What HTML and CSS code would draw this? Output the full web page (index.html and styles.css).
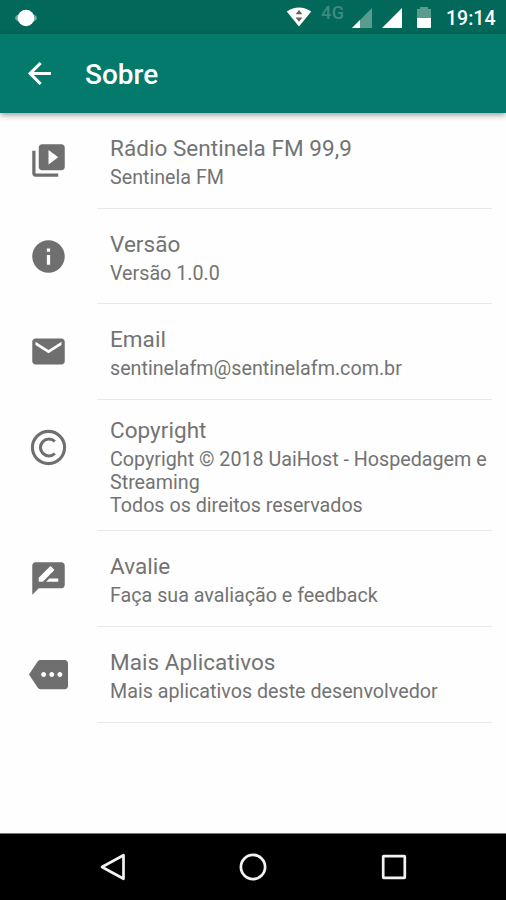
FILE: index.html
```html
<!DOCTYPE html>
<html lang="pt-BR">
<head>
<meta charset="utf-8">
<title>Sobre</title>
<link rel="stylesheet" href="styles.css">
</head>
<body>
<div class="screen">
  <div class="status">
    <svg class="notif" viewBox="0 0 24 18"><ellipse cx="12" cy="9" rx="11" ry="5" fill="#fff" opacity=".45"/><circle cx="12" cy="9" r="8.3" fill="#fff"/></svg>
    <svg class="wifi" viewBox="0 0 26 20"><path d="M.8 4.5Q13-3.3 25.2 4.5L13 19.6Z" fill="#fff"/><path d="M9.6 7.2L13 3l3.4 4.2zM9.6 10.4h6.8L13 14.8z" fill="#65605e"/></svg>
    <span class="net">4G</span>
    <svg class="signal weak" viewBox="0 0 20 20"><path d="M0 20L20 0V20Z" fill="#5a9b90"/><path d="M0 20L8 12V20Z" fill="#fff"/></svg>
    <svg class="signal" viewBox="0 0 20 20"><path d="M0 20L20 0V20Z" fill="#fff"/></svg>
    <svg class="battery" viewBox="0 0 14 21"><path d="M3 0h8v2h3v9H0V2h3z" fill="#5a9b90"/><path d="M0 11h14v9q0 1-1 1H1q-1 0-1-1z" fill="#fff"/></svg>
    <span class="clock">19:14</span>
  </div>
  <header class="bar">
    <svg class="back" viewBox="0 0 24 24"><path d="M19 11.100H8.500l4.900-4.900L12 4.900 4.900 12l7.100 7.100 1.400-1.300-4.900-4.900H19z" fill="#fff"/></svg>
    <h1>Sobre</h1>
  </header>
  <main class="list">
    <section class="row">
      <svg class="icon" viewBox="0 0 24 24"><path d="M4 6H2v14c0 1.100.9 2 2 2h14v-2H4V6zm16-4H8c-1.100 0-2 .9-2 2v12c0 1.100.9 2 2 2h12c1.100 0 2-.9 2-2V4c0-1.100-.9-2-2-2zm-8 12.500v-9l6 4.500-6 4.500z"/></svg>
      <div class="text"><h2>Rádio Sentinela FM 99,9</h2><p>Sentinela FM</p></div>
    </section>
    <section class="row">
      <svg class="icon" viewBox="0 0 24 24"><path d="M12 2C6.480 2 2 6.480 2 12s4.480 10 10 10 10-4.480 10-10S17.520 2 12 2zm1 15h-2v-6h2v6zm0-8h-2V7h2v2z"/></svg>
      <div class="text"><h2>Versão</h2><p>Versão 1.0.0</p></div>
    </section>
    <section class="row">
      <svg class="icon" viewBox="0 0 24 24"><path d="M20 4H4c-1.100 0-1.990.9-1.990 2L2 18c0 1.100.9 2 2 2h16c1.100 0 2-.9 2-2V6c0-1.100-.9-2-2-2zm0 4l-8 5-8-5V6l8 5 8-5v2z"/></svg>
      <div class="text"><h2>Email</h2><p>sentinelafm@sentinelafm.com.br</p></div>
    </section>
    <section class="row tall">
      <svg class="icon" viewBox="0 0 24 24"><circle cx="12" cy="12" r="9.900" fill="none" stroke="#6f6f6f" stroke-width="1.900"/><path d="M15.900 8.300A5.200 5.200 0 1 0 15.900 15.700" fill="none" stroke="#6f6f6f" stroke-width="1.900"/></svg>
      <div class="text"><h2>Copyright</h2><p>Copyright © 2018 UaiHost - Hospedagem e<br>Streaming<br>Todos os direitos reservados</p></div>
    </section>
    <section class="row rate">
      <svg class="icon" viewBox="0 0 24 24"><path d="M20 2H4c-1.100 0-1.990.9-1.990 2L2 22l4-4h14c1.100 0 2-.9 2-2V4c0-1.100-.9-2-2-2zM6 14v-2.470l6.880-6.880c.2-.2.510-.2.710 0l1.770 1.770c.2.2.2.510 0 .710L8.470 14H6zm12 0h-7.500l2-2H18v2z"/></svg>
      <div class="text"><h2>Avalie</h2><p>Faça sua avaliação e feedback</p></div>
    </section>
    <section class="row more">
      <svg class="icon" viewBox="0 0 24 24"><path d="M22 3H7c-.690 0-1.230.350-1.590.880L0 12l5.410 8.110c.360.530.970.890 1.660.890H22c1.100 0 2-.9 2-2V5c0-1.100-.9-2-2-2zM9 13.500c-.830 0-1.500-.670-1.500-1.500s.670-1.500 1.500-1.500 1.500.670 1.500 1.500-.670 1.500-1.500 1.500zm5 0c-.830 0-1.500-.670-1.500-1.500s.670-1.500 1.500-1.500 1.500.670 1.500 1.500-.670 1.500-1.500 1.500zm5 0c-.830 0-1.500-.670-1.500-1.500s.670-1.500 1.500-1.500 1.500.670 1.500 1.500-.670 1.500-1.500 1.500z"/></svg>
      <div class="text"><h2>Mais Aplicativos</h2><p>Mais aplicativos deste desenvolvedor</p></div>
    </section>
  </main>
  <nav class="nav">
    <svg viewBox="0 0 30 30"><path d="M4 15L25.500 3.200V26.800Z"/></svg>
    <svg viewBox="0 0 30 30"><circle cx="15" cy="15" r="12.100"/></svg>
    <svg viewBox="0 0 30 30"><rect x="4.200" y="4.200" width="21.600" height="21.600" rx=".5"/></svg>
  </nav>
</div>
</body>
</html>
```
FILE: styles.css
```css
* { box-sizing: border-box; }
body, h1, h2, p { margin: 0; font-weight: 400; }
svg { display: block; flex: none; }
.screen {
  width: 506px;
  height: 900px;
  display: flex;
  flex-direction: column;
  overflow: hidden;
  background: #fefefe;
  font-family: Roboto, "Liberation Sans", sans-serif;
  color: #737373;
}
.status {
  height: 34px;
  flex: none;
  display: flex;
  align-items: flex-start;
  background: #02685a;
  padding-left: 14px;
  color: #fff;
}
.notif { width: 24px; height: 18px; margin-top: 9px; }
.wifi { width: 26px; height: 20px; margin: 7px 0 0 248px; }
.net {
  width: 24px;
  margin: 4px 0 0 9px;
  font-size: 18px;
  line-height: 18px;
  font-weight: 500;
  letter-spacing: .6px;
  color: #3f8b7e;
}
.signal { width: 20px; height: 20px; margin: 8px 0 0 10px; }
.signal.weak { margin-left: 7px; }
.battery { width: 14px; height: 21px; margin: 7px 0 0 15px; }
.clock {
  margin: 7px 0 0 15px;
  font-size: 19.5px;
  line-height: 23px;
  font-weight: 500;
}
.bar {
  position: relative;
  height: 79px;
  flex: none;
  display: flex;
  align-items: center;
  padding-left: 20px;
  background: #037a6b;
  color: #fff;
  box-shadow: 0 2px 6px rgba(0, 0, 0, .4);
}
.back { width: 39px; height: 39px; }
.bar h1 {
  margin: 2px 0 0 26px;
  font-size: 28px;
  line-height: 32px;
  font-weight: 500;
}
.list { flex: 1; }
.row {
  display: flex;
  height: 95.6px;
  padding-left: 29px;
}
.row.tall { height: 131px; }
.row.rate { height: 96.6px; }
.icon {
  width: 39px;
  height: 39px;
  margin: 28px 29px 0 0;
  fill: #6f6f6f;
}
.text {
  width: 395px;
  padding: 2px 0 0 13px;
  display: flex;
  flex-direction: column;
  justify-content: center;
  gap: 3px;
  border-bottom: 1px solid #e8e8e8;
  white-space: nowrap;
}
.rate .text, .more .text { padding-top: 0; }
.text h2 { font-size: 22.5px; line-height: 30px; letter-spacing: .04px; }
.text p { font-size: 19.7px; line-height: 23px; }
.nav {
  height: 67px;
  flex: none;
  display: flex;
  justify-content: center;
  align-items: center;
  gap: 110.5px;
  padding-bottom: 1px;
  background: #000;
  border-top: 1px solid #777;
}
.nav svg { width: 30px; height: 30px; fill: none; stroke: #f2f2f2; stroke-width: 2.7; stroke-linejoin: round; }
```
